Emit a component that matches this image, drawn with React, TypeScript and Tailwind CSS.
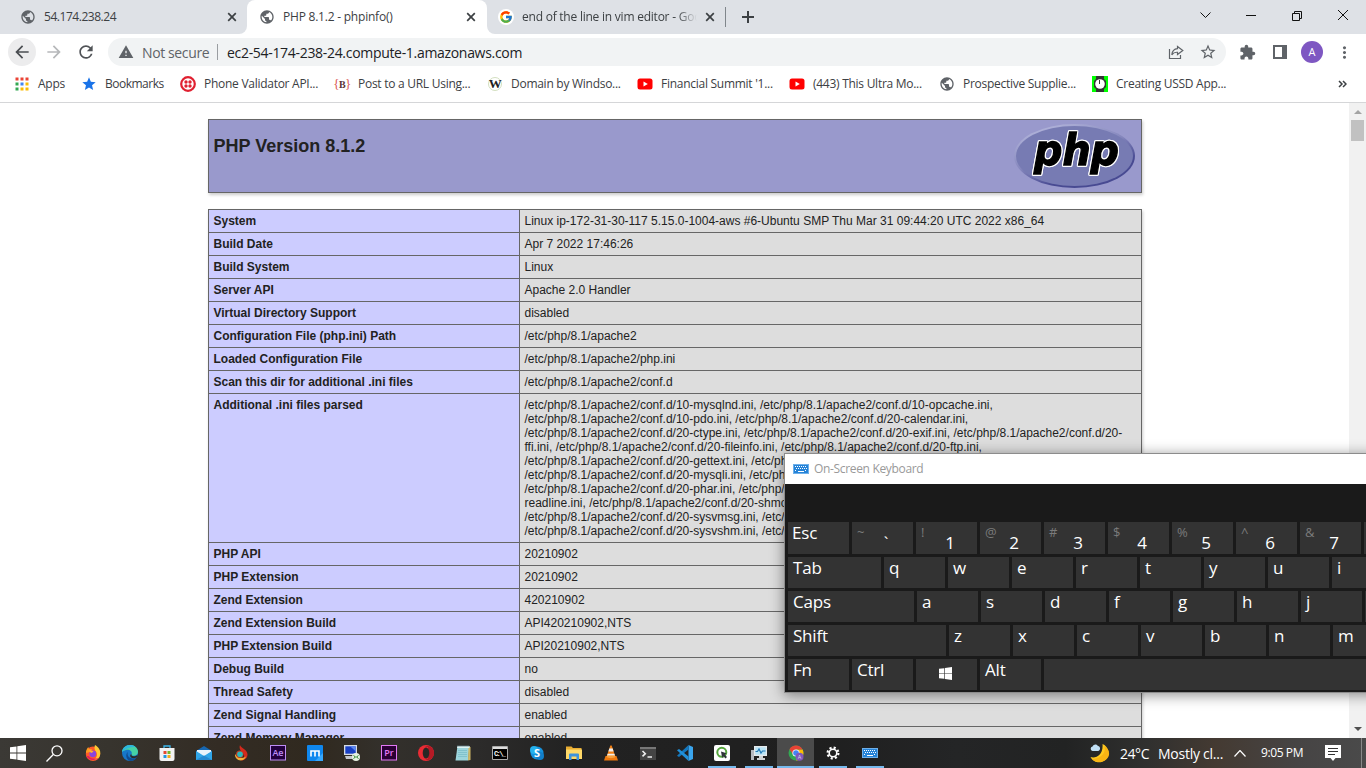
import type { ReactNode } from "react";
import { MdArrowBack, MdArrowForward, MdExtension, MdMoreVert, MdPublic, MdRefresh, MdStar, MdStarBorder, MdWarning } from "react-icons/md";
import { FcGoogle } from "react-icons/fc";

/* ---------- Browser chrome ---------- */

function CloseIcon() {
  return (
    <svg className="shrink-0" width="14" height="14" viewBox="0 0 14 14" stroke="#3c4043" strokeWidth="1.700">
      <path d="m3.200 3.200 7.600 7.600M10.800 3.200 3.200 10.800" />
    </svg>
  );
}

function TabStrip() {
  return (
    <div className="flex h-[34px] shrink-0 bg-white text-[12px] text-[#3c4043]">
      <div className="flex w-[247px] items-center rounded-br-[8px] bg-[#dee1e6] pl-5 pr-[8px]">
        <MdPublic className="size-4 text-[#5f6368]" />
        <span className="ml-2 flex-1 whitespace-nowrap tracking-[-0.46px]">54.174.238.24</span>
        <CloseIcon />
      </div>
      <div className="w-[240px] bg-[#dee1e6]">
        <div className="flex h-full items-center rounded-t-[8px] bg-white pl-3 pr-[9px]">
          <MdPublic className="size-4 text-[#5f6368]" />
          <span className="ml-2 flex-1 whitespace-nowrap tracking-[-0.22px]">PHP 8.1.2 - phpinfo()</span>
          <CloseIcon />
        </div>
      </div>
      <div className="flex flex-1 items-center rounded-bl-[8px] bg-[#dee1e6] pl-[11px]">
        <span className="flex size-4 items-center justify-center rounded-full bg-white">
          <FcGoogle className="size-[14px]" />
        </span>
        <span className="ml-2 w-[175px] overflow-hidden whitespace-nowrap tracking-[-0.23px] [mask-image:linear-gradient(to_right,black_155px,transparent_175px)]">
          end of the line in vim editor - Google Search
        </span>
        <span className="ml-[6px]"><CloseIcon /></span>
        <span className="ml-[8px] h-5 w-px bg-[#80868b]" />
        <svg className="ml-4" width="12" height="12" viewBox="0 0 12 12" stroke="#3c4043" strokeWidth="2">
          <path d="M6 0v12M0 6h12" />
        </svg>
        <div className="flex-1" />
        <svg className="-mt-1 mr-[14px]" width="138" height="12" viewBox="0 0 138 12" fill="none" stroke="#111" strokeWidth="1">
          <path d="M.5 3.500 5.500 8.500 10.500 3.500M46 6.500h10M92.500 4.500h7v7h-7zM94.500 4.500v-2h7v7h-2" />
        </svg>
        <svg className="-ml-[14px] -mt-1 mr-[18px]" width="10" height="10" viewBox="0 0 10 10" stroke="#111">
          <path d="m0 0 10 10M10 0 0 10" />
        </svg>
      </div>
    </div>
  );
}

function Toolbar() {
  return (
    <div className="flex h-9 shrink-0 items-center bg-white text-[#5f6368]">
      <span className="ml-2 flex size-7 items-center justify-center rounded-full bg-[#ececed]">
        <MdArrowBack className="size-[20px] text-[#4a4d51]" />
      </span>
      <MdArrowForward className="ml-2 size-[20px] text-[#b6b8ba]" />
      <MdRefresh className="ml-3 size-5 text-[#505357]" />
      <div className="ml-3 flex h-7 w-[1118px] items-center rounded-full bg-[#f1f3f4] text-[14px]">
        <MdWarning className="ml-[10px] size-4" />
        <span className="ml-2 w-[68px] whitespace-nowrap tracking-[-0.38px]">Not secure</span>
        <span className="ml-[7px] h-4 w-px bg-[#9a9da1]" />
        <span className="ml-[9px] flex-1 whitespace-nowrap tracking-[-0.31px] text-[#202124]">ec2-54-174-238-24.compute-1.amazonaws.com</span>
        <svg className="mr-[15px]" width="16" height="16" viewBox="0 0 16 16" fill="none" stroke="#5f6368" strokeWidth="1.200">
          <path d="M1.500 5v9.500h11V11M9.500 2.500 14.800 6.500 9.500 10.500V8.300C6.800 8.100 5 9 3.800 10.800 4.200 7.200 6 5 9.500 4.700z" />
        </svg>
        <MdStarBorder className="mr-[9px] size-[18px]" />
      </div>
      <MdExtension className="ml-[13px] size-[17px]" />
      <svg className="ml-[17px]" width="14" height="14" viewBox="0 0 14 14">
        <path fill="#5f6368" fillRule="evenodd" d="M0 0h14v14H0zM2 2v10h7V2z" />
      </svg>
      <span className="ml-[14px] flex size-[22px] items-center justify-center rounded-full bg-[#7e57c2] text-[11px] text-white">A</span>
      <MdMoreVert className="ml-3 size-[19px]" />
    </div>
  );
}

function YouTube() {
  return (
    <svg width="16" height="16" viewBox="0 0 16 16">
      <rect x="0.500" y="2.500" width="15" height="11" rx="2.500" fill="#f00" />
      <path d="m6.500 5.500 4.300 2.500-4.300 2.500z" fill="#fff" />
    </svg>
  );
}

const appColors = ["#ea4335", "#ea4335", "#ea4335", "#34a853", "#4285f4", "#fbbc04", "#34a853", "#fbbc04", "#fbbc04"];

function Bookmark({ icon, label, width }: { icon: ReactNode; label: string; width: string }) {
  return (
    <div className={`flex shrink-0 items-center ${width}`}>
      <span className="flex size-4 items-center justify-center">{icon}</span>
      <span className="ml-2 whitespace-nowrap">{label}</span>
    </div>
  );
}

function Bookmarks() {
  return (
    <div className="flex h-[33px] shrink-0 items-center border-b border-[#d5d6d8] bg-white pb-[5px] pl-[14px] text-[12px] tracking-[-0.27px] text-[#3c4043]">
      <Bookmark
        width="w-[67px]"
        label="Apps"
        icon={
          <svg width="14" height="14" viewBox="0 0 14 14">
            {appColors.map((c, i) => (
              <rect key={i} x={(i % 3) * 5 + 0.5} y={Math.floor(i / 3) * 5 + 0.5} width="3" height="3" fill={c} />
            ))}
          </svg>
        }
      />
      <div className="tracking-[-0.5px]">
        <Bookmark width="w-[99px]" label="Bookmarks" icon={<MdStar className="size-4 shrink-0 text-[#1a73e8]" />} />
      </div>
      <Bookmark
        width="w-[154px]"
        label="Phone Validator API..."
        icon={
          <svg width="16" height="16" viewBox="0 0 16 16">
            <circle cx="8" cy="8" r="6.800" fill="#fff" stroke="#e02030" strokeWidth="2.200" />
            <g fill="#e02030"><circle cx="6" cy="6" r="1.700" /><circle cx="10" cy="6" r="1.700" /><circle cx="6" cy="10" r="1.700" /><circle cx="10" cy="10" r="1.700" /></g>
          </svg>
        }
      />
      <Bookmark
        width="w-[153px]"
        label="Post to a URL Using..."
        icon={<span className="whitespace-nowrap font-['Liberation_Serif',serif] text-[13px] tracking-[-0.5px] text-[#d9534f]">{"{"}<b className="text-[10px] text-[#5b3434]">B</b>{"}"}</span>}
      />
      <Bookmark
        width="w-[150px]"
        label="Domain by Windso..."
        icon={<span className="flex size-[14px] items-center justify-center rounded-full border border-[#d3dfc0] font-['Liberation_Serif',serif] text-[13px] font-bold text-[#222]">W</span>}
      />
      <Bookmark width="w-[152px]" label="Financial Summit '1..." icon={<YouTube />} />
      <Bookmark width="w-[150px]" label="(443) This Ultra Mo..." icon={<YouTube />} />
      <Bookmark width="w-[153px]" label="Prospective Supplie..." icon={<MdPublic className="size-4 shrink-0 text-[#5f6368]" />} />
      <Bookmark
        width="w-[200px]"
        label="Creating USSD App..."
        icon={
          <svg width="16" height="16" viewBox="0 0 16 16">
            <path fill="#0f0" d="M0 0h16v16H0z" />
            <path fill="#333" d="M4 0h8v3l2 2v6l-2 2v3H4v-3l-2-2V5l2-2z" />
            <circle cx="8" cy="8" r="4.800" fill="#fff" />
            <path d="M7.500 4v4" stroke="#333" />
          </svg>
        }
      />
      <svg className="ml-auto mr-[19px]" width="9" height="8" viewBox="0 0 9 8" fill="none" stroke="#3c4043" strokeWidth="1.500">
        <path d="m1 1 3 3-3 3M5 1l3 3-3 3" />
      </svg>
    </div>
  );
}

/* ---------- phpinfo page ---------- */

const rows: [string, string[]][] = [
  ["System", ["Linux ip-172-31-30-117 5.15.0-1004-aws #6-Ubuntu SMP Thu Mar 31 09:44:20 UTC 2022 x86_64"]],
  ["Build Date", ["Apr 7 2022 17:46:26"]],
  ["Build System", ["Linux"]],
  ["Server API", ["Apache 2.0 Handler"]],
  ["Virtual Directory Support", ["disabled"]],
  ["Configuration File (php.ini) Path", ["/etc/php/8.1/apache2"]],
  ["Loaded Configuration File", ["/etc/php/8.1/apache2/php.ini"]],
  ["Scan this dir for additional .ini files", ["/etc/php/8.1/apache2/conf.d"]],
  [
    "Additional .ini files parsed",
    [
      "/etc/php/8.1/apache2/conf.d/10-mysqlnd.ini, /etc/php/8.1/apache2/conf.d/10-opcache.ini,",
      "/etc/php/8.1/apache2/conf.d/10-pdo.ini, /etc/php/8.1/apache2/conf.d/20-calendar.ini,",
      "/etc/php/8.1/apache2/conf.d/20-ctype.ini, /etc/php/8.1/apache2/conf.d/20-exif.ini, /etc/php/8.1/apache2/conf.d/20-",
      "ffi.ini, /etc/php/8.1/apache2/conf.d/20-fileinfo.ini, /etc/php/8.1/apache2/conf.d/20-ftp.ini,",
      "/etc/php/8.1/apache2/conf.d/20-gettext.ini, /etc/php/8.1/apache2/conf.d/20-iconv.ini,",
      "/etc/php/8.1/apache2/conf.d/20-mysqli.ini, /etc/php/8.1/apache2/conf.d/20-pdo_mysql.ini,",
      "/etc/php/8.1/apache2/conf.d/20-phar.ini, /etc/php/8.1/apache2/conf.d/20-posix.ini,",
      "readline.ini, /etc/php/8.1/apache2/conf.d/20-shmop.ini, /etc/php/8.1/apache2/conf.d/20-sockets.ini,",
      "/etc/php/8.1/apache2/conf.d/20-sysvmsg.ini, /etc/php/8.1/apache2/conf.d/20-sysvsem.ini,",
      "/etc/php/8.1/apache2/conf.d/20-sysvshm.ini, /etc/php/8.1/apache2/conf.d/20-tokenizer.ini",
    ],
  ],
  ["PHP API", ["20210902"]],
  ["PHP Extension", ["20210902"]],
  ["Zend Extension", ["420210902"]],
  ["Zend Extension Build", ["API420210902,NTS"]],
  ["PHP Extension Build", ["API20210902,NTS"]],
  ["Debug Build", ["no"]],
  ["Thread Safety", ["disabled"]],
  ["Zend Signal Handling", ["enabled"]],
  ["Zend Memory Manager", ["enabled"]],
];

function PhpLogo() {
  return (
    <svg className="shrink-0" width="121" height="64" viewBox="0 0 121 64">
      <defs>
        <linearGradient id="rim" x1="0.200" y1="0" x2="0.800" y2="1">
          <stop offset="0" stopColor="#b5b7dc" />
          <stop offset="0.450" stopColor="#8587bd" />
          <stop offset="0.750" stopColor="#484a92" />
        </linearGradient>
      </defs>
      <ellipse cx="60.500" cy="32" rx="60.500" ry="32" fill="url(#rim)" />
      <ellipse cx="60.500" cy="32" rx="58.500" ry="30" fill="#777bb3" />
      <text
        x="20"
        y="41"
        textLength="85"
        lengthAdjust="spacingAndGlyphs"
        fontFamily="DejaVu Sans"
        fontWeight="bold"
        fontStyle="italic"
        fontSize="42"
        fill="#000"
        stroke="#000"
        strokeWidth="1.300"
        className="[filter:drop-shadow(1px_0_0_#fff)_drop-shadow(-1px_0_0_#fff)_drop-shadow(0_1px_0_#fff)_drop-shadow(0_-1px_0_#fff)]"
      >
        php
      </text>
    </svg>
  );
}

function PhpInfo() {
  return (
    <main className="flex min-h-0 flex-1 overflow-hidden bg-white font-['Liberation_Sans',sans-serif] text-[#222]">
      <div className="flex flex-1 flex-col pl-[208px] pt-4">
        <div className="flex h-[74px] w-[934px] shrink-0 justify-between border border-[#666] bg-[#9999cc] py-1 pl-[4.5px] pr-[6px] shadow-[1px_2px_3px_#ccc]">
          <h1 className="mt-[11px] text-[18px] font-bold leading-[22px]">PHP Version 8.1.2</h1>
          <PhpLogo />
        </div>
        <table className="mt-4 w-[934px] table-fixed border-collapse text-[12px] leading-[14px] shadow-[1px_2px_3px_#ccc]">
          <colgroup>
            <col className="w-[311px]" />
            <col />
          </colgroup>
          <tbody>
            {rows.map(([name, lines]) => (
              <tr key={name}>
                <td className="border border-[#666] bg-[#ccccff] px-[4.5px] py-1 align-top font-bold">{name}</td>
                <td className="border border-[#666] bg-[#dddddd] px-[4.5px] py-1 align-top">
                  {lines.map((line) => (
                    <div key={line} className="whitespace-nowrap">{line}</div>
                  ))}
                </td>
              </tr>
            ))}
          </tbody>
        </table>
      </div>
      <div className="flex w-[17px] flex-col items-center bg-[#f1f1f1]">
        <svg width="17" height="17" viewBox="0 0 17 17"><path d="m5 11 4-4 4 4z" fill="#a3a3a3" /></svg>
        <div className="h-[21px] w-[13px] bg-[#c1c1c1]" />
        <div className="flex-1" />
        <svg width="17" height="17" viewBox="0 0 17 17"><path d="m5 6 4 4 4-4z" fill="#505050" /></svg>
      </div>
    </main>
  );
}

/* ---------- On-screen keyboard ---------- */

function KeyboardIcon() {
  return (
    <svg width="16" height="10" viewBox="0 0 16 10">
      <path fill="#2583d8" d="M0 0h16v10H0z" />
      <path fill="none" stroke="#8ec3f0" strokeWidth=".8" d="M.4.400h15.200v9.200H.4z" />
      <path stroke="#fff" strokeDasharray="1 1" d="M2 2.500h12M3 4.500h11M2 6.500h2M12 6.500h2" />
      <path stroke="#fff" d="M5 7.500h6" />
    </svg>
  );
}

function WindowsLogo({ size }: { size: number }) {
  return (
    <svg width={size} height={size} viewBox="0 0 16 16" fill="#fff">
      <path d="m0 2.300 6.500-.9v6.200H0zM7.300 1.300 16 0v7.600H7.300zM0 8.400h6.500v6.200L0 13.700zM7.300 8.400H16V16l-8.700-1.300z" />
    </svg>
  );
}

const numberKeys = [["~", "`"], ["!", "1"], ["@", "2"], ["#", "3"], ["$", "4"], ["%", "5"], ["^", "6"], ["&", "7"]];

function Key({ label, width = "w-[61px]" }: { label: ReactNode; width?: string }) {
  return <div className={`h-[31px] shrink-0 bg-[#333] pl-[5px] leading-[21px] ${width}`}>{label}</div>;
}

function KeyRow({ first, width, letters }: { first: string; width: string; letters: string }) {
  return (
    <div className="flex gap-[3px]">
      <Key label={first} width={width} />
      {letters.split("").map((l) => (
        <Key key={l} label={l} />
      ))}
      <Key label="" />
    </div>
  );
}

function OnScreenKeyboard() {
  return (
    <section className="absolute left-[784px] top-[453px] h-[240px] w-[640px] border border-[#8c8c8c] bg-[#1a1a1a] shadow-[0_2px_13px_rgba(0,0,0,0.45)]">
      <header className="flex h-[30px] items-center bg-white pl-[8px] text-[12px] tracking-[-0.33px] text-[#999]">
        <KeyboardIcon />
        <span className="ml-[5px]">On-Screen Keyboard</span>
      </header>
      <div className="flex flex-col gap-[3px] pl-[3px] pt-[38px] text-[17px] tracking-[-0.2px] text-white">
        <div className="flex gap-[3px]">
          <div className="h-8 w-[61px] shrink-0 bg-[#333] pl-1 leading-[21px]">Esc</div>
          {numberKeys.map(([upper, lower]) => (
            <div key={lower} className="flex h-8 w-[61px] shrink-0 bg-[#333] pl-[5px]">
              <span className="w-[19px] text-[13px] leading-[20px] text-[#7b7b7b]">{upper}</span>
              <span className="w-[20px] pt-[9px] text-center leading-[23px]">{lower}</span>
            </div>
          ))}
          <div className="h-8 w-[61px] shrink-0 bg-[#333]" />
        </div>
        <KeyRow first="Tab" width="w-[93px]" letters="qwertyui" />
        <KeyRow first="Caps" width="w-[126px]" letters="asdfghj" />
        <KeyRow first="Shift" width="w-[158px]" letters="zxcvbnm" />
        <div className="flex gap-[3px]">
          <Key label="Fn" />
          <Key label="Ctrl" />
          <div className="flex h-[31px] w-[61px] shrink-0 items-center justify-center bg-[#333] pb-[2px] pr-[2px]">
            <WindowsLogo size={13} />
          </div>
          <Key label="Alt" />
          <Key label="" width="w-[380px]" />
        </div>
      </div>
    </section>
  );
}

/* ---------- Taskbar ---------- */

function Icon({ children }: { children: ReactNode }) {
  return <svg width="16" height="16" viewBox="0 0 16 16">{children}</svg>;
}

function AdobeTile({ label, color, bg }: { label: string; color: string; bg: string }) {
  return (
    <Icon>
      <rect x="0.500" y="0.500" width="15" height="14.500" fill={bg} stroke={color} />
      <text x="8" y="11.300" textAnchor="middle" fontFamily="Open Sans" fontSize="9" fontWeight="600" fill={color}>{label}</text>
    </Icon>
  );
}

type Task = { name: string; icon: ReactNode; state?: "open" | "active" };

const tasks: Task[] = [
  { name: "start", icon: <span className="mr-px"><WindowsLogo size={16} /></span> },
  {
    name: "search",
    icon: (
      <svg className="mr-[2px]" width="17" height="17" viewBox="0 0 17 17" fill="none" stroke="#fff" strokeWidth="1.300">
        <circle cx="11" cy="5.800" r="5" />
        <path d="m7.300 9.500-6.800 7" />
      </svg>
    ),
  },
  {
    name: "firefox",
    icon: (
      <Icon>
        <circle cx="8" cy="8.800" r="7.200" fill="#ff5a2a" />
        <path d="M10 0c3.500 2 6 5.500 5.200 9.500C14.500 13.500 11 15 8.500 15c4-2 4-6 2.500-8.500C9.500 5 9 2 10 0z" fill="#ffc832" />
        <path d="M1 8C.8 5.500 2 3.500 3.300 2l.7 2h3L5.500 7z" fill="#ff9a1f" />
        <circle cx="7.800" cy="8.800" r="3.400" fill="#8b45dd" />
        <path d="M3.500 5.500c2-.5 4 0 5 1.300L6.200 8z" fill="#ffb02e" />
        <path d="M1.500 11c2 4 8 5.500 12 2-3 1-7 1.500-10-2z" fill="#e8195f" />
      </Icon>
    ),
  },
  {
    name: "edge",
    icon: (
      <Icon>
        <circle cx="8" cy="8" r="8" fill="#1677c9" />
        <path d="M0 7C.5 3 4 0 8 0c5 0 8 3.500 8 6.800 0 2.500-2 4-4.500 4-2 0-2.500-1-1.800-2C10.500 6 7 4 4 5 2 5.500.8 6 0 7z" fill="#46d2a4" />
        <path d="M0 7C.5 3 4 0 8 0c2 0 4 .6 5.500 2C9 1.500 4 3 0 7z" fill="#2db6de" />
        <path d="M6 7c-1.500 3 1 6.500 5 6.500 1.500 0 2.500-.5 3.500-1-1 2-3 3.500-6 3.500C4 15 3 9 6 7z" fill="#104c91" />
        <path d="M9.600 8.800c-.8 1.300.2 2.400 2 2.400 1.500 0 3-.5 3.800-1.500l.1 2c-1.500 1.500-4.500 2-6.500.8-1.300-1-1-3 .6-3.700z" fill="#2d2a24" />
      </Icon>
    ),
  },
  {
    name: "store",
    icon: (
      <Icon>
        <path d="M5 4V1h6v3" fill="none" stroke="#3cb6ec" strokeWidth="1.300" />
        <path d="M.5 3h15v11a2 2 0 0 1-2 2h-11a2 2 0 0 1-2-2z" fill="#f2f2f2" />
        <path fill="#e5492f" d="M4.500 6h3v3h-3z" /><path fill="#74b729" d="M8.500 6h3v3h-3z" />
        <path fill="#2097e0" d="M4.500 10h3v3h-3z" /><path fill="#f3ad18" d="M8.500 10h3v3h-3z" />
      </Icon>
    ),
  },
  {
    name: "mail",
    icon: (
      <Icon>
        <path d="m0 6 8-5 8 5v9H0z" fill="#1767b1" />
        <path d="M1 5h14v2l-7 5-7-5z" fill="#e9f3fb" />
        <path d="M0 6 8 11l8-5v9H0z" fill="#30a5e8" /><path d="m0 15 8-4.500 8 4.500z" fill="#2588d0" />
      </Icon>
    ),
  },
  {
    name: "flame",
    icon: (
      <Icon>
        <path d="M7 0c.5 3 7.500 4.500 7.500 9.500 0 3.500-3 6-6.500 6 3-2 4-4 2.500-6.500C8.500 6.500 5.500 4 7 0z" fill="#d3291c" />
        <path d="M2 9c-.5 4 3 7 7 6.300 2-.5 3.500-2 4-4-2 2-8 3-11-2.300z" fill="#f0ae38" />
        <circle cx="6.800" cy="9.300" r="3.700" fill="#c03c25" /><circle cx="7" cy="9.300" r="2.800" fill="#29b8bd" />
      </Icon>
    ),
  },
  { name: "after-effects", icon: <AdobeTile label="Ae" color="#bd8cf5" bg="#23003f" /> },
  {
    name: "maxthon",
    icon: (
      <Icon>
        <rect width="16" height="16" rx="1" fill="#0f87ee" /><path d="M16 8v8H8z" fill="#35a8ff" />
        <path d="M4 11.500V6h8v5.500M8 6.500v5" stroke="#fff" strokeWidth="1.600" fill="none" />
      </Icon>
    ),
  },
  {
    name: "remote",
    icon: (
      <Icon>
        <path d="M0 0h13v10H0z" fill="#d6dce4" /><path d="M1.300 1.300h10.400v7.400H1.300z" fill="#1940c4" /><path d="M6 1.300h5.700v5z" fill="#5b87ef" />
        <path d="M1 11h11v3H2z" fill="#c5c8cc" /><circle cx="12" cy="12" r="4" fill="#e7f1e2" /><path d="m9.500 10.500 2 1.500-2 1.500M14.500 10.500l-2 1.500 2 1.500" stroke="#28852b" fill="none" />
      </Icon>
    ),
  },
  { name: "premiere", icon: <AdobeTile label="Pr" color="#e279f5" bg="#2a0035" /> },
  {
    name: "opera",
    icon: (
      <Icon>
        <circle cx="8" cy="8" r="8" fill="#e92b34" /><path d="M11 1c3 1 5 4 5 7s-2 6-5 7c-2 .3-3-.5-4-1h3V2H7c1-1 2.500-1.300 4-1z" fill="#b51a25" />
        <ellipse cx="8" cy="8" rx="3.300" ry="5.500" fill="#292725" />
      </Icon>
    ),
  },
  {
    name: "notepad",
    icon: (
      <Icon>
        <path d="M2.500 1h12L13 15.500H.5z" fill="#9dd5dc" /><path d="M13.500 2h2v13L13 15.500z" fill="#cfb867" />
        <path d="M2.500 1h12v2H2z" fill="#dff3f4" /><path d="M3 0v2M5 0v2M7 0v2M9 0v2M11 0v2M13 0v2" stroke="#5f7880" strokeWidth=".8" />
        <path d="M3 5.500h9M3 7.500h9M3 9.500h9M3 11.500h9" stroke="#6fb6c3" strokeWidth=".6" />
      </Icon>
    ),
  },
  {
    name: "cmd",
    icon: (
      <svg width="16" height="14" viewBox="0 0 16 14">
        <path d="M.5.500h15v13H.5z" fill="#000" stroke="#aaa" /><path d="M1 1h14v2H1z" fill="#ddd" />
        <text x="2" y="10" fontFamily="Liberation Mono" fontWeight="bold" fontSize="7" textLength="12" fill="#fff">C:\_</text>
      </svg>
    ),
  },
  {
    name: "skype",
    icon: (
      <Icon>
        <circle cx="8" cy="8" r="6.500" fill="#1592dd" /><circle cx="5" cy="5" r="4" fill="#24b1ee" /><circle cx="11" cy="11" r="4" fill="#117fc9" />
        <text x="8" y="12" textAnchor="middle" fontFamily="Open Sans" fontSize="11" fontWeight="700" fill="#fff">S</text>
      </Icon>
    ),
  },
  {
    name: "explorer",
    icon: (
      <Icon>
        <path d="M0 1.500h5.500L7 3h8.500v10H0z" fill="#e9ad32" /><path d="M0 4.500h16v9.500H0z" fill="#ffd968" />
        <path d="M3 15V9.500a1 1 0 0 1 1-1h8a1 1 0 0 1 1 1V15h-2.500v-3.500h-5V15z" fill="#3f93dc" />
      </Icon>
    ),
  },
  {
    name: "vlc",
    icon: (
      <Icon>
        <path d="M7.300.5h1.400L12.500 12h-9z" fill="#f28115" /><path d="m6.300 3.600h3.400l.9 2.800H5.400zM4.600 8.800h6.800l.6 2H4z" fill="#eee" />
        <path d="M2.500 11h11l1.500 4.500H1z" fill="#ee780d" /><path d="M4 10.500h8l.4 1.500c-2 1.500-7 1.500-8.800 0z" fill="#f9a13c" />
      </Icon>
    ),
  },
  {
    name: "terminal",
    icon: (
      <svg width="16" height="13" viewBox="0 0 16 13">
        <path d="M0 0h16v13H0z" fill="#444" /><path d="M0 0h16v2H0z" fill="#777" />
        <path d="m2.500 4 2.800 2.700-2.800 2.700M7.500 10H12" fill="none" stroke="#eee" strokeWidth="1.600" />
      </svg>
    ),
  },
  {
    name: "vscode",
    icon: (
      <Icon>
        <path d="m11.500 0 4.500 2v12l-4.500 2z" fill="#3aa5ee" /><path d="M11.500 0v4.500L2 12 0 10.700z" fill="#1477bd" /><path d="m0 5.300 2-1.300 9.500 7.500V16z" fill="#2190d8" />
      </Icon>
    ),
  },
  {
    name: "qlik",
    state: "open",
    icon: (
      <Icon>
        <rect width="16" height="16" rx="2" fill="#fff" /><circle cx="7.800" cy="7.300" r="4.500" fill="none" stroke="#55a53d" strokeWidth="2" />
        <path d="m7 6.500 5.500 1.800-1.700 1.500 2.200 2.200-1.500 1.500-2-2.200L8.200 13z" fill="#30343a" />
      </Icon>
    ),
  },
  {
    name: "monitor",
    state: "open",
    icon: (
      <Icon>
        <path d="M0 5h3v10H0z" fill="#b6bac0" /><path d="M3 1h13v10H3z" fill="#e5e9ec" /><path d="M4.300 2.300h10.400v7.400H4.300z" fill="#b8e3f5" />
        <path d="M4.500 6.500h2L8 4l2 4 1.500-2h3" fill="none" stroke="#2379b6" strokeWidth="1.200" /><path d="M8 11h4v2h2v2H6v-2h2z" fill="#cfd2d5" />
      </Icon>
    ),
  },
  {
    name: "chrome",
    state: "active",
    icon: (
      <Icon>
        <circle cx="8" cy="8" r="7.500" fill="#33a852" />
        <path d="M8 4.500h6.600A7.500 7.500 0 0 1 8 15.500L11 10z" fill="#fbbc05" /><path d="M1.500 4.200A7.500 7.500 0 0 1 14.500 4.500H8L5 9.500z" fill="#e94235" />
        <circle cx="8" cy="8" r="3.600" fill="#fff" /><circle cx="8" cy="8" r="2.800" fill="#4285f4" /><circle cx="11.500" cy="11.800" r="4" fill="#8058bd" />
        <text x="11.500" y="13.800" fontFamily="Open Sans" fontSize="5.500" textAnchor="middle" fill="#ddd">A</text>
      </Icon>
    ),
  },
  {
    name: "settings",
    state: "open",
    icon: (
      <Icon>
        <circle cx="8" cy="8" r="5.400" fill="none" stroke="#fff" strokeWidth="2.200" strokeDasharray="2.120 2.120" /><circle cx="8" cy="8" r="3.800" fill="none" stroke="#fff" strokeWidth="1.600" />
      </Icon>
    ),
  },
  { name: "keyboard", state: "open", icon: <KeyboardIcon /> },
];

function Taskbar() {
  return (
    <footer className="flex h-[30px] shrink-0 bg-[linear-gradient(90deg,#3b3935_0%,#37342e_8%,#332c24_16%,#30291f_23%,#33302b_28%,#2c2b2a_35%,#222_42%,#1f1f1f_60%,#242526_70%,#222323_78%,#30302f_84%,#443a32_89%,#464444_95%,#4a4a4a_100%)] text-white">
      {tasks.map(({ name, icon, state }) => (
        <div key={name} className={`flex h-full w-[37px] shrink-0 flex-col items-center ${state === "active" ? "bg-[#4b4b4b]" : ""}`}>
          <div className="flex h-[28px] items-center pt-[2px]">{icon}</div>
          {state && <div className={`h-[2px] bg-[#76b9ed] ${state === "active" ? "w-full" : "w-[28px]"}`} />}
        </div>
      ))}
      <div className="flex h-full flex-1 items-center">
        <svg className="ml-[202px]" width="20" height="20" viewBox="0 0 20 20">
          <path d="M12.500 1a9.500 9.500 0 1 1-12 13c6 2 13-3 12-13z" fill="#ffc91f" />
          <path d="M14 3c3 6-3 13-12 13 4 5 15 4 17-4 .5-4-1-7-5-9z" fill="#f9b414" />
          <path d="M2.500 8a2.300 2.300 0 0 1 0-4.500C3.500.8 7 .8 8 3c2.500 0 3 4.500 0 5z" fill="#bfdff5" />
        </svg>
        <span className="ml-[10px] w-[38px] whitespace-nowrap pt-[1px] text-[14px] tracking-[-0.45px]">24°C</span>
        <span className="w-[75px] whitespace-nowrap pt-[1px] text-[14px] tracking-[-0.25px]">Mostly cl...</span>
        <svg className="ml-px" width="12" height="7" viewBox="0 0 12 7" fill="none" stroke="#fff" strokeWidth="1.200"><path d="m.5 6.500 5.500-6 5.500 6" /></svg>
        <span className="ml-[15px] w-[64px] whitespace-nowrap text-[12px] tracking-[-0.4px]">9:05 PM</span>
        <svg width="16" height="16" viewBox="0 0 16 16"><path fill="#fff" d="M0 0h16v13h-5.500L8 16l-2.500-3H0z" /><path stroke="#333" d="M3 3.500h10M3 6.500h10M3 9.500h7" /></svg>
        <span className="ml-[20px] h-full w-px bg-[#888]" />
      </div>
    </footer>
  );
}

export default function App() {
  return (
    <div className="relative flex h-[768px] w-[1366px] flex-col overflow-hidden font-['Open_Sans','Noto_Sans',sans-serif]">
      <TabStrip />
      <Toolbar />
      <Bookmarks />
      <PhpInfo />
      <OnScreenKeyboard />
      <Taskbar />
    </div>
  );
}
